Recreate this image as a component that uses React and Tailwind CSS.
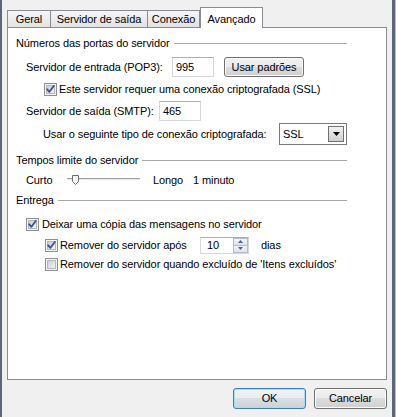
import React from 'react';

const Check = ({ checked, id }) => (
  <svg width="13" height="13" viewBox="0 0 13 13" className="shrink-0">
    <defs>
      <linearGradient id={id} x1="0" y1="0" x2="1" y2="1">
        <stop offset="0" stopColor="#c6cbd2" />
        <stop offset="1" stopColor="#f8f8f8" />
      </linearGradient>
    </defs>
    <rect x="0.5" y="0.5" width="12" height="12" fill="#f4f4f4" stroke="#8e8f8f" />
    <rect x="2.5" y="2.5" width="8" height="8" fill={`url(#${id})`} stroke="#b5b9be" />
    {checked && (
      <path d="M3.2 6.3 L5.4 8.8 L9.8 3" fill="none" stroke="#3f5585" strokeWidth="1.9" strokeLinecap="round" strokeLinejoin="round" />
    )}
  </svg>
);

const Group = ({ title, className }) => (
  <div className={`flex h-[16px] items-center pl-[8px] pr-[39px] ${className}`}>
    <span className="whitespace-nowrap">{title}</span>
    <div className="ml-[4px] h-px flex-1 bg-[#a9a9a9]" />
  </div>
);

const Input = ({ value, className }) => (
  <div className={`flex h-[20px] items-center border border-[#d5d8de] border-t-[#abadb3] bg-white pl-[3px] ${className}`}>
    {value}
  </div>
);

const App = () => {
  return (
    <div className="flex h-[417px] w-[396px] bg-[#f0f0f0] font-['Liberation_Sans',Arial,sans-serif] text-[11px] tracking-[-0.1px] text-black">
      {/* frame left */}
      <div className="w-[2px] bg-[#5d6777]" />

      <div className="flex flex-1 flex-col">
        {/* Tabs */}
        <div className="flex items-end pl-[5px] pt-[7px]">
          <div className="flex h-[17px] w-[43px] items-center justify-center border-l border-t border-[#898c95] bg-linear-to-b from-[#f6f6f6] to-[#e2e2e2]">
            Geral
          </div>
          <div className="flex h-[17px] w-[97px] items-center justify-center border-l border-t border-[#898c95] bg-linear-to-b from-[#f6f6f6] to-[#e2e2e2]">
            Servidor de saída
          </div>
          <div className="flex h-[17px] w-[53px] items-center justify-center border-x border-t border-[#898c95] bg-linear-to-b from-[#f6f6f6] to-[#e2e2e2]">
            Conexão
          </div>
          <div className="relative z-10 -mb-px flex h-[21px] w-[63px] items-start justify-center border-x border-t border-[#898c95] bg-white pt-[3px]">
            Avançado
          </div>
        </div>

        {/* Panel */}
        <div className="ml-[5px] flex h-[353px] w-[380px] flex-col border border-[#898c95] bg-white">
          <Group title="Números das portas do servidor" className="mt-[7px]" />

          <div className="mt-[6px] flex h-[20px] items-center pl-[18px]">
            <span className="w-[146px] whitespace-nowrap">Servidor de entrada (POP3):</span>
            <Input value="995" className="w-[42px]" />
            <button className="ml-[10px] h-[20px] w-[80px] rounded-[3px] border border-[#707070] bg-[linear-gradient(#f2f2f2,#ebebeb_50%,#dddddd_50%,#cfcfcf)] shadow-[inset_0_0_0_1px_#fbfbfb]">
              Usar padrões
            </button>
          </div>

          <div className="mt-[5px] flex h-[14px] items-center gap-[2px] pl-[36px]">
            <Check checked id="c1" />
            <span className="whitespace-nowrap">Este servidor requer uma conexão criptografada (SSL)</span>
          </div>

          <div className="mt-[5px] flex h-[20px] items-center pl-[18px]">
            <span className="w-[133px] whitespace-nowrap">Servidor de saída (SMTP):</span>
            <Input value="465" className="w-[42px]" />
          </div>

          <div className="mt-[2px] flex h-[22px] items-center pl-[35px]">
            <span className="w-[236px] whitespace-nowrap">Usar o seguinte tipo de conexão criptografada:</span>
            <div className="flex h-[22px] w-[68px] items-center justify-between border border-[#7a7a7a] bg-white pl-[3px] pr-[2px]">
              <span>SSL</span>
              <div className="flex h-[16px] w-[16px] items-center justify-center border border-[#707070] bg-linear-to-b from-[#f2f2f2] to-[#cfcfcf]">
                <svg width="7" height="4" viewBox="0 0 7 4">
                  <path d="M0 0 H7 L3.5 4 Z" fill="#000" />
                </svg>
              </div>
            </div>
          </div>

          <Group title="Tempos limite do servidor" className="mt-[7px]" />

          <div className="mt-[4px] flex h-[16px] items-center pl-[18px]">
            <span className="w-[41px]">Curto</span>
            <div className="w-[86px]">
              <svg width="75" height="14" viewBox="0 0 75 14">
                <line x1="0" y1="5.5" x2="73" y2="5.5" stroke="#a3a3a3" />
                <line x1="0" y1="6.5" x2="73" y2="6.5" stroke="#e6e6e6" />
                <path d="M5.5 2.5 H11.5 V8.5 L8.5 11.5 L5.5 8.5 Z" fill="#f4f4f4" stroke="#6f6f6f" />
              </svg>
            </div>
            <span className="w-[40px]">Longo</span>
            <span>1 minuto</span>
          </div>

          <Group title="Entrega" className="mt-[4px]" />

          <div className="mt-[9px] flex h-[14px] items-center gap-[3px] pl-[18px]">
            <Check checked id="c2" />
            <span className="whitespace-nowrap">Deixar uma cópia das mensagens no servidor</span>
          </div>

          <div className="mt-[5px] flex h-[18px] items-center pl-[37px]">
            <Check checked id="c3" />
            <span className="ml-[2px] w-[140px] whitespace-nowrap">Remover do servidor após</span>
            <div className="flex h-[17px] w-[49px] border border-[#d5d8de] border-t-[#abadb3] bg-white">
              <span className="flex flex-1 items-center pl-[6px]">10</span>
              <div className="flex w-[15px] flex-col">
                <div className="flex flex-1 items-center justify-center border border-[#b6bcc6] bg-linear-to-b from-[#f3f5f8] to-[#dde3ea]">
                  <svg width="5" height="3" viewBox="0 0 5 3">
                    <path d="M0 3 L2.5 0 L5 3 Z" fill="#4c6393" />
                  </svg>
                </div>
                <div className="flex flex-1 items-center justify-center border border-t-0 border-[#b6bcc6] bg-linear-to-b from-[#f3f5f8] to-[#dde3ea]">
                  <svg width="5" height="3" viewBox="0 0 5 3">
                    <path d="M0 0 L5 0 L2.5 3 Z" fill="#4c6393" />
                  </svg>
                </div>
              </div>
            </div>
            <span className="ml-[12px]">dias</span>
          </div>

          <div className="mt-[3px] flex h-[14px] items-center gap-[2px] pl-[37px]">
            <Check id="c4" />
            <span className="whitespace-nowrap">Remover do servidor quando excluído de 'Itens excluídos'</span>
          </div>
        </div>

        {/* Buttons */}
        <div className="mt-[8px] flex justify-end gap-[8px] pr-[5px]">
          <button className="h-[21px] w-[73px] rounded-[3px] border border-[#3c7fb1] bg-[linear-gradient(#f0f3f5,#e8ecef_50%,#d9dfe3_50%,#cbd2d7)] shadow-[inset_0_0_0_1px_#a9dcf6]">
            OK
          </button>
          <button className="h-[21px] w-[73px] rounded-[3px] border border-[#707070] bg-[linear-gradient(#f2f2f2,#ebebeb_50%,#dddddd_50%,#cfcfcf)] shadow-[inset_0_0_0_1px_#fbfbfb]">
            Cancelar
          </button>
        </div>
      </div>

      {/* frame right */}
      <div className="w-[3px] bg-[#5d6777]" />
      <div className="w-px bg-[#b9bec6]" />
    </div>
  );
};

export default App;
